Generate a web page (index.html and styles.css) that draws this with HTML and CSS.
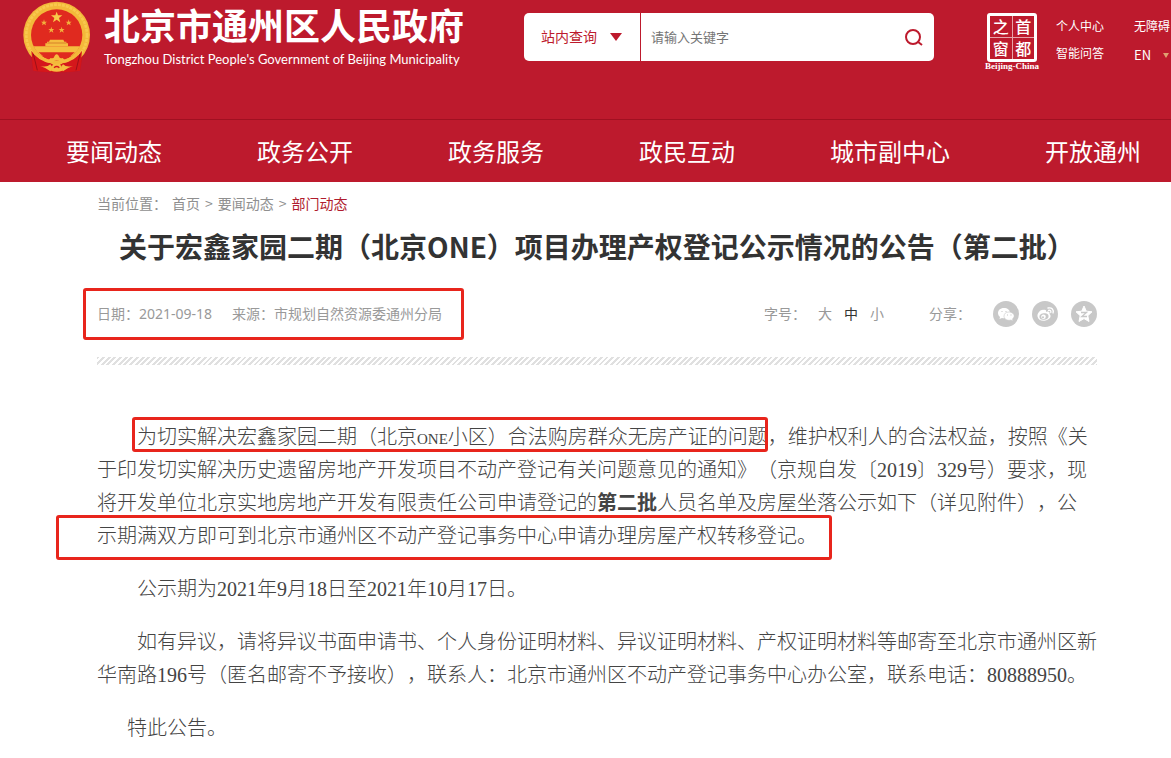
FILE: index.html
```html
<!DOCTYPE html>
<html lang="zh-CN">
<head>
    <meta charset="UTF-8">
    <meta name="viewport" content="width=device-width, initial-scale=1.0">
    <title>关于宏鑫家园二期（北京ONE）项目办理产权登记公示情况的公告（第二批）</title>
    <link rel="stylesheet" href="styles.css">
</head>
<body>
    <header class="header">
        <div class="header-top">
            <a class="brand" href="#">
                <svg class="emblem" viewBox="60 0 216 222" aria-hidden="true">
                    <path d="M92 158 L100 212 Q168 222 240 212 L250 158 Z" fill="#c8161d"/>
                    <circle cx="170" cy="105" r="100" fill="#f3b93a"/>
                    <circle cx="170" cy="105" r="91" fill="none" stroke="#f8c94e" stroke-width="8" stroke-dasharray="9 3"/>
                    <circle cx="170" cy="105" r="77" fill="#e02a1f"/>
                    <path d="M101 139 H239 Q232 157 214 168 H126 Q108 157 101 139 Z" fill="#f5bd3f"/>
                    <path d="M116 157 H224 L205 174 H135 Z" fill="#e02a1f"/>
                    <path d="M136 139 V130 H141 V125 H147 L150 119 H190 L193 125 H199 V130 H204 V139 Z" fill="#f5bd3f"/>
                    <path d="M142 129 H198" stroke="#c9631f" stroke-width="2"/>
                    <path d="M170 35 L174 46 L187 46 L177 54 L181 67 L170 59 L159 67 L163 54 L153 46 L166 46 Z" fill="#f8cc4a"/>
                    <path id="star" d="M132 58 L134 65 L141 65 L136 69 L138 76 L132 72 L126 76 L128 69 L123 65 L130 65 Z" fill="#f2b13c"/>
                    <use href="#star" x="74"/>
                    <use href="#star" x="22" y="22"/>
                    <use href="#star" x="53" y="22"/>
                    <path d="M94 152 Q112 181 152 190 L170 200 L188 190 Q228 181 246 152 L240 212 Q170 222 100 212 Z" fill="#d5171b"/>
                    <path d="M100 162 L112 211 M240 162 L228 211" stroke="#9c1018" stroke-width="3"/>
                    <path d="M130 180 Q147 183 152 174 Q161 178 165 166 Q170 160 175 166 Q179 178 188 174 Q193 183 210 180 Q198 193 182 185 Q170 178 158 185 Q142 193 130 180 Z" fill="#f5bd3f"/>
                    <path d="M121 198 Q141 203 151 193 Q163 205 151 214 Q140 204 121 198 Z M219 198 Q199 203 189 193 Q177 205 189 214 Q200 204 219 198 Z" fill="#f5bd3f"/>
                    <path d="M156 197 Q170 184 184 197 L187 212 Q170 218 153 212 Z" fill="#f5bd3f"/>
                    <path d="M162 203 Q170 196 178 203" fill="none" stroke="#d5171b" stroke-width="4"/>
                </svg>
                <span class="brand-text">
                    <span class="brand-name">北京市通州区人民政府</span>
                    <span class="brand-sub">Tongzhou District People's Government of Beijing Municipality</span>
                </span>
            </a>

            <form class="search">
                <div class="search-scope">
                    <select aria-label="查询范围">
                        <option>站内查询</option>
                    </select>
                </div>
                <input class="search-input" type="text" placeholder="请输入关键字" aria-label="请输入关键字">
                <button class="search-btn" type="button" aria-label="搜索">
                    <svg width="18" height="18" viewBox="0 0 18 18" fill="none" stroke="#bd1a2d" stroke-width="2">
                        <circle cx="8" cy="8" r="7"/>
                        <path d="M12.5 12.5 L17 16"/>
                    </svg>
                </button>
            </form>

            <div class="tools">
                <a class="capital" href="#">
                    <span class="capital-seal">
                        <span>之</span><span>首</span>
                        <span>窗</span><span>都</span>
                    </span>
                    <span class="capital-name">Beijing-China</span>
                </a>
                <div class="tool-links">
                    <a href="#">个人中心</a>
                    <a href="#">智能问答</a>
                </div>
                <div class="tool-links">
                    <a href="#">无障碍</a>
                    <a class="lang" href="#">EN</a>
                </div>
            </div>
        </div>

        <nav class="nav">
            <a href="#">要闻动态</a>
            <a href="#">政务公开</a>
            <a href="#">政务服务</a>
            <a href="#">政民互动</a>
            <a href="#">城市副中心</a>
            <a href="#">开放通州</a>
        </nav>
    </header>

    <main class="main">
        <div class="crumbs">
            <span>当前位置：</span>
            <a href="#">首页</a>
            <span>&gt;</span>
            <a href="#">要闻动态</a>
            <span>&gt;</span>
            <a class="current" href="#">部门动态</a>
        </div>

        <h1 class="title">关于宏鑫家园二期（北京ONE）项目办理产权登记公示情况的公告（第二批）</h1>

        <div class="meta">
            <div class="meta-info mark mark-meta">
                <span>日期：2021-09-18</span>
                <span>来源：市规划自然资源委通州分局</span>
            </div>
            <div class="font-size">
                <span>字号：</span>
                <button type="button">大</button>
                <button type="button" class="active">中</button>
                <button type="button">小</button>
            </div>
            <div class="share">
                <span class="share-label">分享：</span>
                <a href="#" aria-label="微信">
                    <svg viewBox="0 0 26 26">
                        <circle cx="13" cy="13" r="13" fill="#c8c8c8"/>
                        <path d="M11 7 C7 7 5 9.500 5 12 C5 14 6 15 7 16 L6.500 18 L9 17 C14 18 17 15 17 12 C17 9 14.500 7 11 7 Z" fill="#fff"/>
                        <path d="M16 11 C12.500 11 11 13 11 15.200 C11 18 14 20 18 19 L20 20 L19.500 18 C23 15 20.500 11 16 11 Z" fill="#fff" stroke="#c8c8c8" stroke-width="0.600"/>
                        <path d="M8.500 10.500 h1 M12.500 10.500 h1 M14 14 h1 M17.500 14 h1" stroke="#c8c8c8" stroke-width="1.200"/>
                    </svg>
                </a>
                <a href="#" aria-label="微博">
                    <svg viewBox="0 0 26 26">
                        <circle cx="13" cy="13" r="13" fill="#c8c8c8"/>
                        <path d="M12 9 C9 8 5 12 5.500 15.500 C6 19 10 20.500 13.500 19.500 C18 18.500 20 15 17.500 13 C18 11 17 10 14 11 C14.500 9.500 13.500 8.500 12 9 Z" fill="#fff"/>
                        <ellipse cx="12" cy="15.500" rx="4.600" ry="3.200" fill="#c8c8c8" transform="rotate(-10 12 15.500)"/>
                        <circle cx="11.500" cy="15.700" r="2.300" fill="#fff"/>
                        <circle cx="11" cy="16.200" r="1" fill="#c8c8c8"/>
                        <path d="M16 7 C20 6 22 9 21 12 M16.500 9.300 C18.500 9 19.200 10 18.800 11.500" fill="none" stroke="#fff" stroke-width="1.300" stroke-linecap="round"/>
                    </svg>
                </a>
                <a href="#" aria-label="QQ空间">
                    <svg viewBox="0 0 26 26">
                        <circle cx="13" cy="13" r="13" fill="#c8c8c8"/>
                        <path d="M13 5 L15.300 10.200 L21 10.800 L16.800 14.700 L18 20.500 L13 17.600 L8 20.500 L9.200 14.700 L5 10.800 L10.700 10.200 Z" fill="#fff" stroke="#fff" stroke-linejoin="round"/>
                        <path d="M10 11.500 H15.500 L10.800 15.500 H16" fill="none" stroke="#c8c8c8" stroke-width="1.300"/>
                    </svg>
                </a>
            </div>
        </div>

        <div class="divider"></div>

        <article class="content">
            <p><span class="mark mark-first">为切实解决宏鑫家园二期（北京<span class="latin">ONE</span>小区）合法购房群众无房产证的问题</span>，维护权利人的合法权益，按照《关<br>
            于印发切实解决历史遗留房地产开发项目不动产登记有关问题意见的通知》（京规自发〔2019〕329号）要求，现<br>
            将开发单位北京实地房地产开发有限责任公司申请登记的<strong>第二批</strong>人员名单及房屋坐落公示如下（详见附件），公<br>
            <span class="mark mark-last">示期满双方即可到北京市通州区不动产登记事务中心申请办理房屋产权转移登记。</span></p>
            <p>公示期为2021年9月18日至2021年10月17日。</p>
            <p>如有异议，请将异议书面申请书、个人身份证明材料、异议证明材料、产权证明材料等邮寄至北京市通州区新<br>
            华南路196号（匿名邮寄不予接收），联系人：北京市通州区不动产登记事务中心办公室，联系电话：80888950。</p>
            <p class="closing">特此公告。</p>
        </article>
    </main>
</body>
</html>
```

FILE: styles.css
```css
* {
    box-sizing: border-box;
}

body {
    margin: 0;
    font-family: 'Noto Sans CJK SC', sans-serif;
    font-size: 14px;
    color: #333;
    background: #fff;
    text-spacing-trim: space-all;
    overflow-x: hidden;
}

a {
    color: inherit;
    text-decoration: none;
}

/* Header */
.header {
    background: #bd1a2d;
    color: #fff;
}

.header-top {
    display: flex;
    align-items: flex-start;
    height: 119px;
    padding-left: 20px;
}

.brand {
    flex: 1;
    display: flex;
    gap: 12px;
}

.emblem {
    width: 72px;
    height: 74px;
    flex: none;
}

.brand-text {
    display: flex;
    flex-direction: column;
    white-space: nowrap;
}

.brand-name {
    font-size: 36px;
    font-weight: 700;
    line-height: 49px;
}

.brand-sub {
    font-family: Lato, sans-serif;
    font-size: 13px;
    line-height: 20px;
}

.search {
    display: flex;
    width: 410px;
    height: 48px;
    margin: 13px 50px 0 0;
    background: #fff;
    border-radius: 5px;
    overflow: hidden;
}

.search-scope {
    position: relative;
    width: 117px;
    border-right: 1px solid #bd1a2d;
}

.search-scope::after {
    content: "";
    position: absolute;
    top: 20px;
    right: 18px;
    border: 6px solid transparent;
    border-top: 8px solid #bd1a2d;
    border-bottom: 0;
    pointer-events: none;
}

.search-scope select {
    width: 100%;
    height: 100%;
    padding: 0 0 2px 17px;
    border: 0;
    background: none;
    appearance: none;
    font-family: inherit;
    font-size: 14px;
    color: #bd1a2d;
}

.search-input {
    flex: 1;
    min-width: 0;
    padding: 0 10px 2px;
    border: 0;
    font-family: inherit;
    font-size: 13px;
}

.search-input::placeholder {
    color: #757575;
}

.search-btn {
    display: flex;
    align-items: center;
    padding: 2px 11px 0;
    border: 0;
    background: none;
    cursor: pointer;
}

.tools {
    display: flex;
    width: 187px;
    padding-top: 13px;
    font-size: 12px;
    white-space: nowrap;
}

.capital {
    display: flex;
    flex-direction: column;
    align-items: center;
    width: 56px;
    margin-right: 16px;
}

.capital-seal {
    display: grid;
    grid-template-columns: 1fr 1fr;
    gap: 1px;
    width: 50px;
    height: 49px;
    border: 3px solid #fff;
    border-radius: 3px;
    background: #e7a3aa;
}

.capital-seal span {
    background: #bd1a2d;
    font-size: 16px;
    font-weight: 500;
    line-height: 21px;
    text-align: center;
}

.capital-name {
    font-family: 'Liberation Serif', serif;
    font-size: 9px;
    font-weight: 700;
    line-height: 9px;
}

.tool-links {
    display: flex;
    flex-direction: column;
    gap: 7px;
    padding-top: 3px;
    margin-right: 30px;
    line-height: 20px;
}

.tool-links:last-child {
    margin-right: 0;
}

.lang {
    display: flex;
    align-items: center;
    gap: 12px;
    font-size: 13px;
    line-height: 24px;
}

.lang::after {
    content: "";
    border: 3px solid transparent;
    border-top: 5px solid #e0a070;
    border-bottom: 0;
}

.nav {
    display: flex;
    justify-content: space-between;
    padding: 0 30px 0 66px;
    border-top: 1px solid #a01021;
    font-size: 24px;
    line-height: 62px;
}

/* Article */
.main {
    padding: 11px 74px 14px 97px;
}

.crumbs {
    display: flex;
    gap: 5px;
    line-height: 20px;
    color: #8f8f8f;
}

.crumbs .current {
    color: #b01c2e;
}

.title {
    margin: 12px 0 0;
    font-size: 28px;
    font-weight: 700;
    line-height: 42px;
    text-align: center;
    color: #333;
}

.meta {
    display: flex;
    align-items: center;
    height: 26px;
    margin-top: 34px;
    font-family: 'Noto Sans', 'Noto Sans CJK SC', sans-serif;
    line-height: 24px;
    color: #999;
}

.meta-info {
    display: flex;
    gap: 20px;
    margin-right: auto;
}

.font-size {
    display: flex;
    gap: 12px;
    margin-right: 45px;
}

.font-size button {
    padding: 0;
    border: 0;
    background: none;
    font: inherit;
    color: #999;
    cursor: pointer;
}

.font-size .active {
    color: #333;
}

.share {
    display: flex;
    align-items: center;
    gap: 13px;
}

.share-label {
    margin-right: 9px;
}

.share svg {
    display: block;
    width: 26px;
    height: 26px;
}

.divider {
    height: 8px;
    margin-top: 30px;
    background: repeating-linear-gradient(135deg, #e0e0e0 0, #e0e0e0 2px, #fff 2px, #fff 4px);
}

.content {
    margin-top: 56px;
    font-family: 'Liberation Serif', 'Noto Sans CJK SC', serif;
    font-size: 20px;
    font-weight: 300;
    line-height: 33px;
    color: #444;
}

.content p {
    margin: 0 0 20px;
    text-indent: 40px;
}

.content .closing {
    margin-bottom: 0;
    text-indent: 30px;
}

.content strong {
    font-weight: 700;
}

.latin {
    font-size: 15px;
    line-height: 15px;
}

/* Red frames round the key passages */
.mark {
    position: relative;
}

.mark::after {
    content: "";
    position: absolute;
    border: 3px solid #e8251c;
    border-radius: 3px;
    pointer-events: none;
}

.mark-meta::after {
    inset: -14px -22px -14px -14px;
}

.mark-first,
.mark-last {
    display: inline-block;
    text-indent: 0;
    vertical-align: top;
}

.mark-first::after {
    inset: -4px 0 2px -5px;
}

.mark-last::after {
    inset: -5px -15px -7px -41px;
}
```
